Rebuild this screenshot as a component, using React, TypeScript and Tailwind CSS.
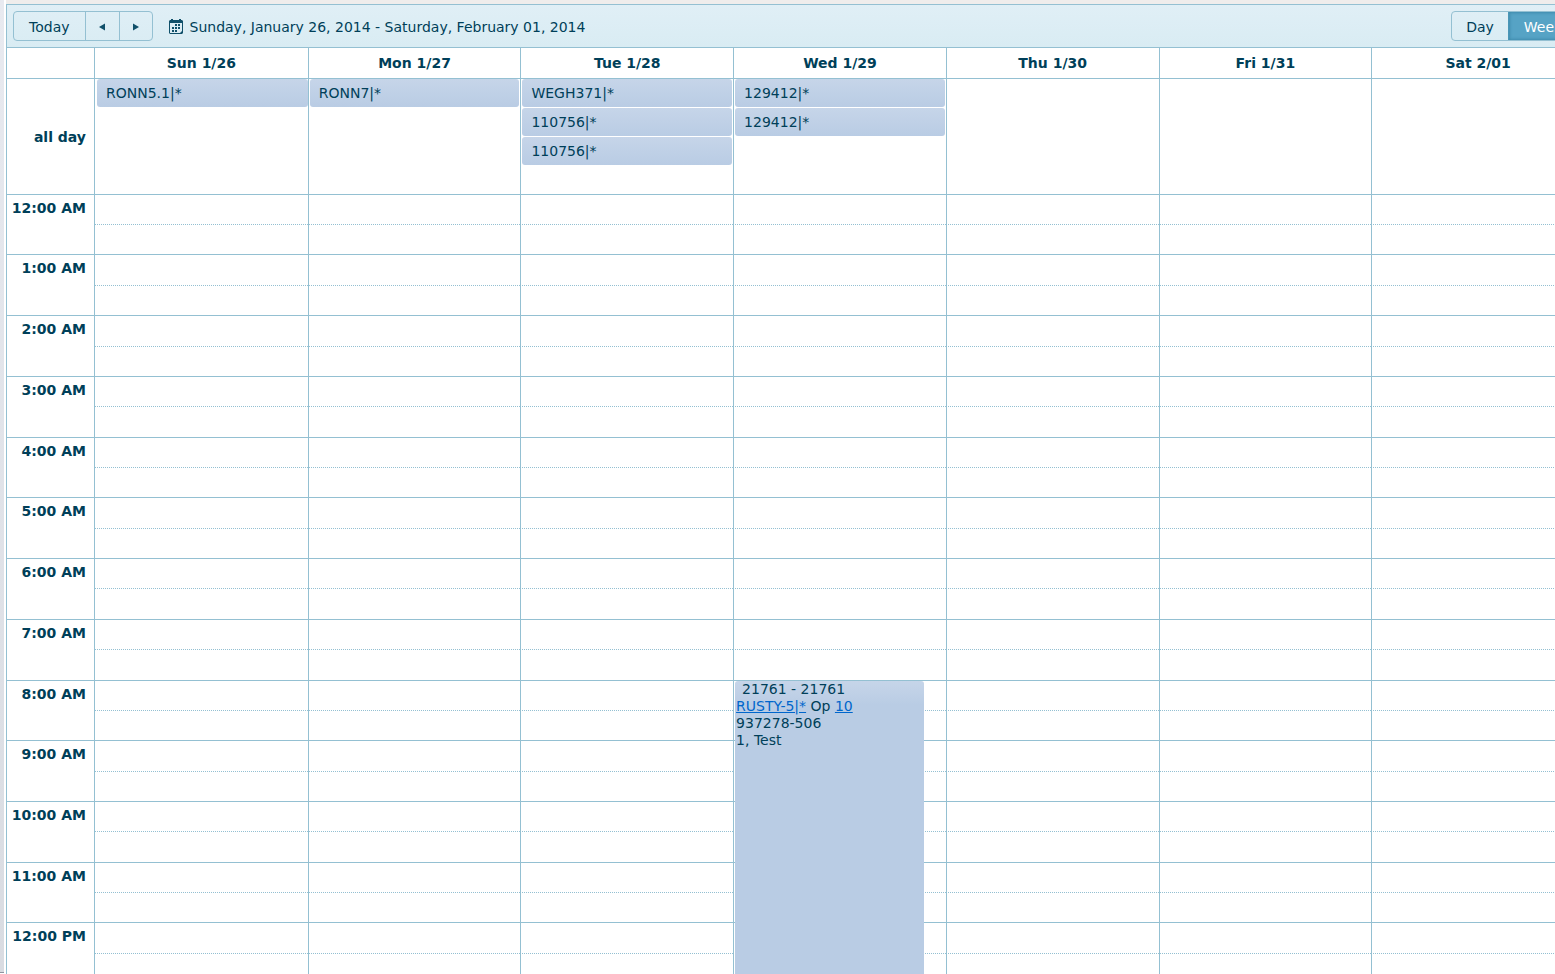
import React from "react";

type CalendarEvent = { title: string };

const days: { label: string; events: CalendarEvent[] }[] = [
  { label: "Sun 1/26", events: [{ title: "RONN5.1|*" }] },
  { label: "Mon 1/27", events: [{ title: "RONN7|*" }] },
  { label: "Tue 1/28", events: [{ title: "WEGH371|*" }, { title: "110756|*" }, { title: "110756|*" }] },
  { label: "Wed 1/29", events: [{ title: "129412|*" }, { title: "129412|*" }] },
  { label: "Thu 1/30", events: [] },
  { label: "Fri 1/31", events: [] },
  { label: "Sat 2/01", events: [] },
];

// Each hour is split into two half-hour slots; `tall` marks slots one pixel taller.
const hours: { label: string; tall: [boolean, boolean] }[] = [
  { label: "12:00 AM", tall: [false, false] },
  { label: "1:00 AM", tall: [true, false] },
  { label: "2:00 AM", tall: [true, false] },
  { label: "3:00 AM", tall: [false, true] },
  { label: "4:00 AM", tall: [false, false] },
  { label: "5:00 AM", tall: [true, false] },
  { label: "6:00 AM", tall: [false, true] },
  { label: "7:00 AM", tall: [false, true] },
  { label: "8:00 AM", tall: [false, false] },
  { label: "9:00 AM", tall: [true, false] },
  { label: "10:00 AM", tall: [false, true] },
  { label: "11:00 AM", tall: [false, false] },
  { label: "12:00 PM", tall: [true, false] },
];

function CalendarIcon() {
  return (
    <svg width="14" height="15" viewBox="0 0 14 15" fill="#10506a" aria-hidden="true">
      <path
        fillRule="evenodd"
        d="M1 1h1v-1h2v1h6v-1h2v1h1l1 1v12l-1 1h-12l-1-1v-12zM1 4v10h10l2-2v-8z"
      />
      <path d="M6 5h2v2h-2zM9 5h2v2h-2zM3 8h2v2h-2zM6 8h2v2h-2zM9 8h2v2h-2zM3 11h2v2h-2zM6 11h2v2h-2z" />
    </svg>
  );
}

function Toolbar() {
  return (
    <header className="flex h-[43px] items-center border-b border-[#94c0d2] bg-linear-to-b from-[#e0eff6] to-[#d9ecf3] px-[6px]">
      <div className="flex h-[30px] overflow-hidden rounded-[4px] border border-[#94c0d2]">
        <button type="button" className="px-[15px] pt-px">Today</button>
        <button type="button" aria-label="Previous week" className="flex w-[34px] items-center justify-center border-l border-[#94c0d2]">
          <svg width="6" height="8" viewBox="0 0 6 8" className="mt-[2px]" aria-hidden="true">
            <path d="M6 0.5v7L0 4z" fill="#10506a" />
          </svg>
        </button>
        <button type="button" aria-label="Next week" className="flex w-[33px] items-center justify-center border-l border-[#94c0d2]">
          <svg width="6" height="8" viewBox="0 0 6 8" className="mt-[2px]" aria-hidden="true">
            <path d="M0 0.5v7L6 4z" fill="#10506a" />
          </svg>
        </button>
      </div>
      <button type="button" className="ml-4 flex items-center gap-[7px] pt-px">
        <CalendarIcon />
        <span>Sunday, January 26, 2014 - Saturday, February 01, 2014</span>
      </button>
      <div className="ml-auto flex h-[30px] overflow-hidden rounded-[4px] border border-[#94c0d2]">
        <button type="button" className="w-14 pt-px">Day</button>
        <button type="button" aria-pressed="true" className="w-[69px] border-l border-[#4a96b6] bg-[#56a3c5] pt-px text-white shadow-[inset_0_0_3px_1px_#3f8cad]">
          Week
        </button>
      </div>
    </header>
  );
}

function TimedEvent() {
  return (
    <article className="absolute top-0 left-px z-10 h-[364px] w-[189px] rounded-[3px] bg-[#b9cce4] bg-linear-to-b from-[#c6d5e9] to-[#b9cce4] to-[24px] pl-px leading-[17px]">
      <p className="pl-[6px]">21761 - 21761</p>
      <p>
        <a href="#rusty" className="text-[#0066cc] underline">RUSTY-5|*</a> Op{" "}
        <a href="#op-10" className="text-[#0066cc] underline">10</a>
      </p>
      <p>937278-506</p>
      <p>1, Test</p>
    </article>
  );
}

function HourRows({ label, tall }: { label: string; tall: [boolean, boolean] }) {
  return (
    <>
      <tr className={tall[0] ? "h-[31px]" : "h-[30px]"}>
        <th scope="row" rowSpan={2} className="border-r border-b border-[#94c0d2] pt-[3px] pr-2 text-right align-top font-bold">
          {label}
        </th>
        {days.map((day, i) => (
          <td
            key={day.label}
            className={
              i === 0
                ? "border-b border-[#94c0d2] [border-bottom-style:dotted]"
                : "relative border-b border-l border-[#94c0d2] [border-bottom-style:dotted]"
            }
          >
            {label === "8:00 AM" && i === 3 ? <TimedEvent /> : null}
          </td>
        ))}
      </tr>
      <tr className={tall[1] ? "h-[31px]" : "h-[30px]"}>
        {days.map((day, i) => (
          <td key={day.label} className={i === 0 ? "border-b border-[#94c0d2]" : "border-b border-l border-[#94c0d2]"} />
        ))}
      </tr>
    </>
  );
}

export default function App() {
  return (
    <div className="flex h-screen overflow-hidden bg-white font-['Verdana','DejaVu_Sans',sans-serif] text-[14px] leading-[20px] text-[#003f59]">
      <div className="mb-px w-1 shrink-0 border-b border-[#8f94a0] bg-linear-to-b from-[#e8eaf0] to-[#d9dce2]" />
      <main className="ml-[2px] min-w-0 flex-1">
        <div className="h-1 bg-[#efedec]" />
        <section className="w-[calc(100%+29px)] border-t border-l border-[#94c0d2]">
          <Toolbar />
          <table className="w-full table-fixed border-separate border-spacing-0">
            <thead>
              <tr className="h-[31px]">
                <td className="w-[88px] border-r border-b border-[#94c0d2]" />
                {days.map((day, i) => (
                  <th key={day.label} scope="col" className={i === 0 ? "border-b border-[#94c0d2] font-bold" : "border-b border-l border-[#94c0d2] font-bold"}>
                    {day.label}
                  </th>
                ))}
              </tr>
            </thead>
            <tbody>
              <tr className="h-[116px]">
                <th scope="row" className="border-r border-b border-[#94c0d2] pr-2 text-right font-bold">all day</th>
                {days.map((day, i) => (
                  <td key={day.label} className={i === 0 ? "border-b border-[#94c0d2] pl-[2px] align-top" : "border-b border-l border-[#94c0d2] px-px align-top"}>
                    <div className="flex flex-col gap-px">
                      {day.events.map((event, n) => (
                        <div key={n} className="h-7 rounded-[3px] bg-linear-to-b from-[#c6d5e9] to-[#b9cce4] px-[9px] leading-[28px]">
                          {event.title}
                        </div>
                      ))}
                    </div>
                  </td>
                ))}
              </tr>
              {hours.map((hour) => (
                <HourRows key={hour.label} {...hour} />
              ))}
            </tbody>
          </table>
        </section>
      </main>
    </div>
  );
}
